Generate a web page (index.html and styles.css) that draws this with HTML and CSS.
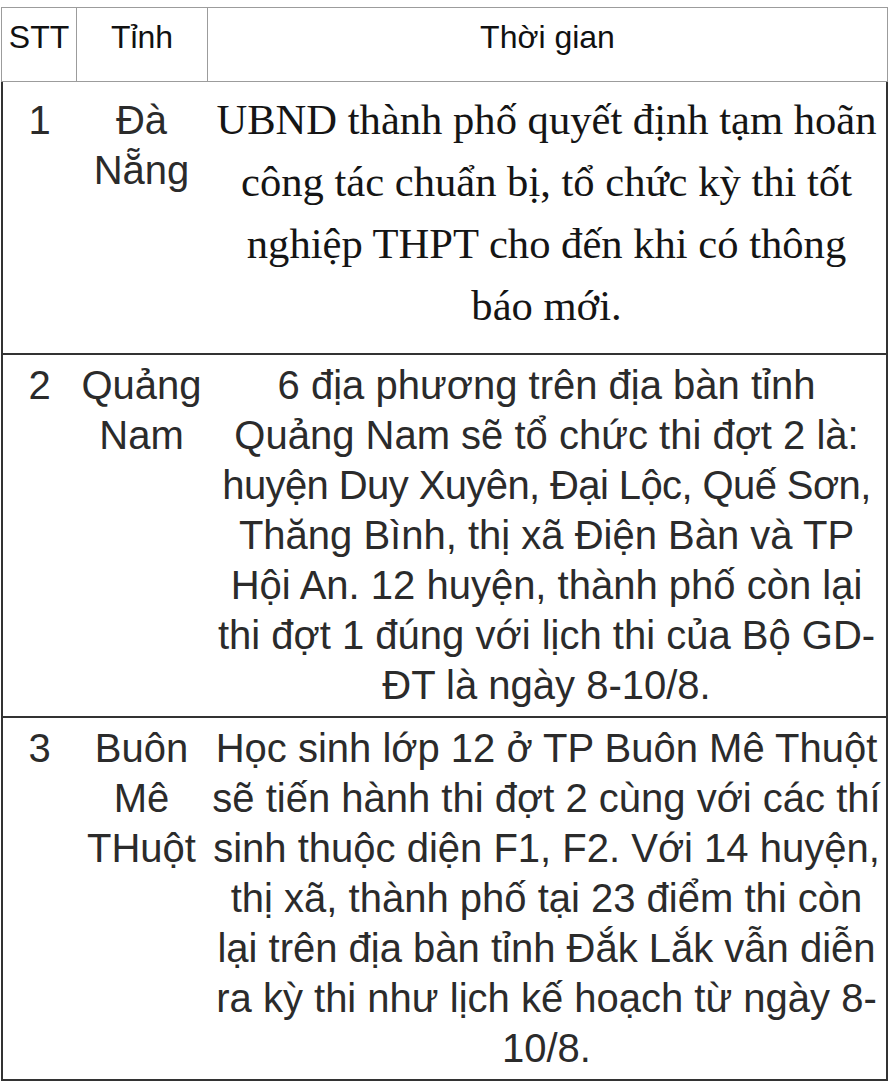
FILE: index.html
```html
<!DOCTYPE html>
<html lang="vi">
<head>
<meta charset="utf-8">
<title>Lịch thi</title>
<link rel="stylesheet" href="styles.css">
</head>
<body>
<table class="sched">
  <colgroup>
    <col class="c-stt">
    <col class="c-tinh">
    <col class="c-time">
  </colgroup>
  <thead>
    <tr>
      <th>STT</th>
      <th>Tỉnh</th>
      <th>Thời gian</th>
    </tr>
  </thead>
  <tbody>
    <tr class="r1">
      <td>1</td>
      <td>Đà Nẵng</td>
      <td class="serif">UBND thành phố quyết định tạm hoãn công tác chuẩn bị, tổ chức kỳ thi tốt nghiệp THPT cho đến khi có thông báo mới.</td>
    </tr>
    <tr>
      <td>2</td>
      <td>Quảng Nam</td>
      <td class="lines">6 địa phương trên địa bàn tỉnh<br>Quảng Nam sẽ tổ chức thi đợt 2 là:<br><span class="tight">huyện Duy Xuyên, Đại Lộc, Quế Sơn,</span><br>Thăng Bình, thị xã Điện Bàn và TP<br>Hội An. 12 huyện, thành phố còn lại<br>thi đợt 1 đúng với lịch thi của Bộ GD-<br>ĐT là ngày 8-10/8.</td>
    </tr>
    <tr>
      <td>3</td>
      <td>Buôn Mê THuột</td>
      <td class="lines">Học sinh lớp 12 ở TP Buôn Mê Thuột<br>sẽ tiến hành thi đợt 2 cùng với các thí<br>sinh thuộc diện F1, F2. Với 14 huyện,<br>thị xã, thành phố tại 23 điểm thi còn<br>lại trên địa bàn tỉnh Đắk Lắk vẫn diễn<br>ra kỳ thi như lịch kế hoạch từ ngày 8-<br>10/8.</td>
    </tr>
  </tbody>
</table>
</body>
</html>
```

FILE: styles.css
```css
html, body {
  margin: 0;
  padding: 0;
  background: #ffffff;
}
body {
  padding: 7px 0 0 1px;
  font-family: "Liberation Sans", Arial, sans-serif;
}
.sched {
  border-collapse: separate;
  border-spacing: 0;
  table-layout: fixed;
  width: 887px;
}
.c-stt { width: 75px; }
.c-tinh { width: 131px; }
.c-time { width: 681px; }

.sched th {
  font-weight: normal;
  font-size: 32px;
  line-height: 36px;
  color: #111;
  height: 75px;
  padding: 11px 2px 0 2px;
  box-sizing: border-box;
  text-align: center;
  vertical-align: top;
  border-top: 1px solid #9c9c9c;
  border-bottom: 1px solid #9c9c9c;
  border-left: 1px solid #9c9c9c;
}
.sched th:last-child {
  border-right: 1px solid #9c9c9c;
}
.sched td {
  font-size: 40px;
  line-height: 50px;
  color: #2b2b2b;
  text-align: center;
  vertical-align: baseline;
  padding: 5px 3px 6px 3px;
  border-bottom: 2px solid #333;
}
.sched td:first-child {
  border-left: 2px solid #333;
}
.sched td:last-child {
  border-right: 2px solid #333;
  padding-left: 4px;
  padding-right: 4px;
}
.sched td.lines {
  white-space: nowrap;
}
.tight {
  letter-spacing: -0.6px;
}
.sched td.serif {
  font-family: "Liberation Serif", "Times New Roman", serif;
  font-size: 42.6px;
  line-height: 62px;
  color: #151515;
  padding: 7px 7px 16px 7px;
}
```
